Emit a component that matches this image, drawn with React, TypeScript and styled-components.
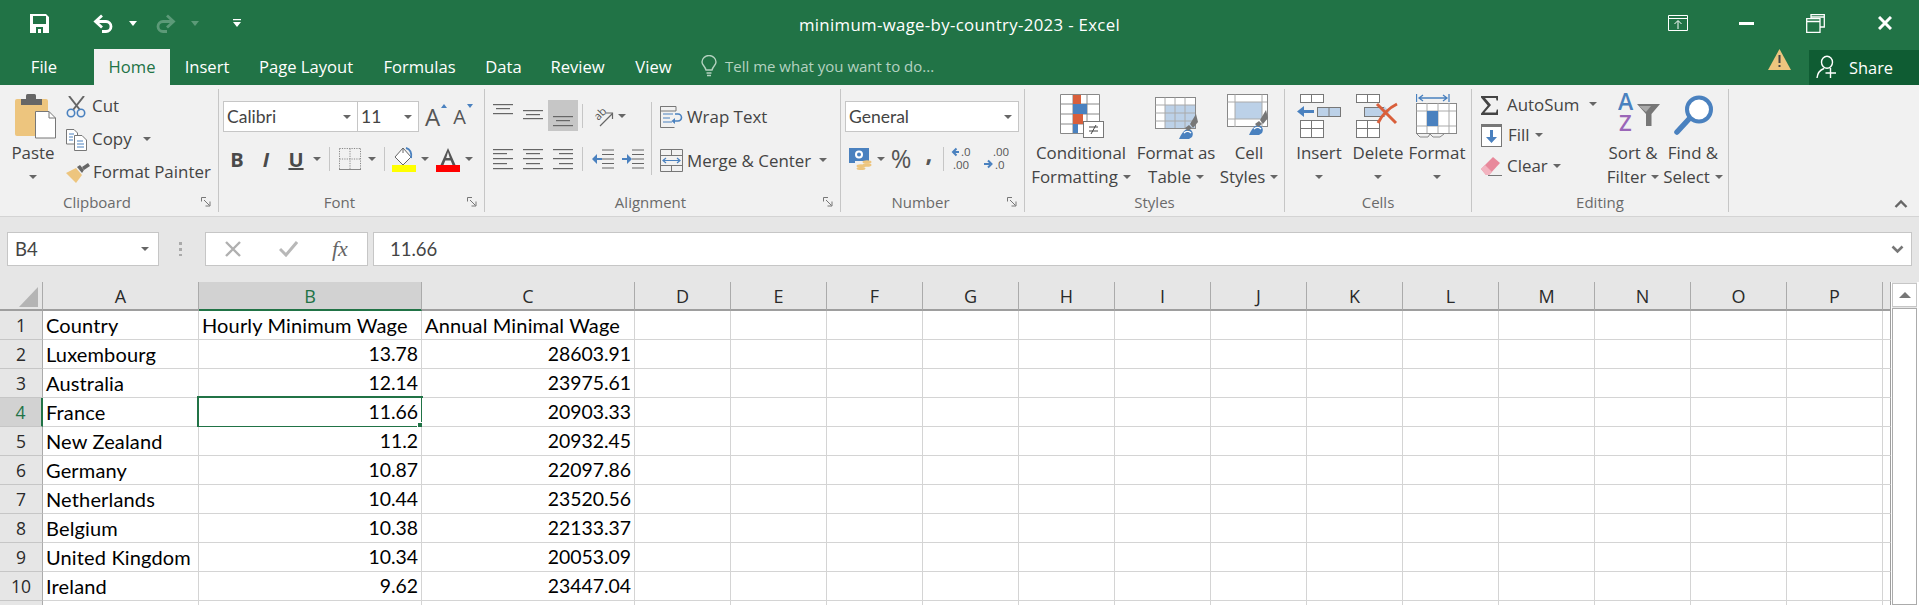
import React from 'react';
import styled, { createGlobalStyle } from 'styled-components';

const UI = `"Open Sans", "Noto Sans", sans-serif`;
const SHEET = `Lato, "Noto Sans", sans-serif`;
const BLUE = '#4a81bf';
const GREY = '#666';

const Global = createGlobalStyle`
  html, body { margin: 0; padding: 0; background: #e6e6e6; overflow: hidden; }
  * { box-sizing: border-box; }
`;

const Page = styled.div`
  width: 1919px; height: 605px; overflow: hidden; background: #e6e6e6;
  font-family: ${UI}; color: #444; display: flex; flex-direction: column;
`;

/* ---- title bar ---- */
const TitleBar = styled.div`
  height: 49px; background: #217346; display: grid; grid-template-columns: 1fr auto 1fr; color: #fff; flex: none;
`;
const QuickAccess = styled.div`display: flex; align-items: center; padding-left: 30px; height: 46px;`;
const TitleText = styled.div`font-size: 16.8px; line-height: 50px; letter-spacing: 0.02em;`;
const WindowButtons = styled.div`display: flex; align-items: center; justify-content: flex-end; height: 46px; padding-right: 27px;`;
const Slot = styled.span<{ $ml?: number }>`display: inline-flex; flex: none; align-items: center; margin-left: ${p => p.$ml ?? 0}px;`;

/* ---- tabs ---- */
const TabRow = styled.div`height: 36px; background: #217346; display: flex; align-items: stretch; flex: none;`;
const Tab = styled.div<{ $w: number; $active?: boolean; $ml?: number }>`
  width: ${p => p.$w}px; margin-left: ${p => p.$ml ?? 0}px; text-align: center; font-size: 16.6px; line-height: 35px; white-space: nowrap;
  color: ${p => (p.$active ? '#217346' : '#fff')}; background: ${p => (p.$active ? '#f1f1f1' : 'transparent')};
`;
const TellMe = styled.div`display: flex; align-items: center; margin-left: 13px; color: #b4d2c0; font-size: 15px; gap: 8px; flex: 1; height: 34px;`;
const Share = styled.div`
  width: 110px; height: 35px; background: #0f5c33; color: #fff; font-size: 16.4px; line-height: 33px; display: flex; align-items: center; padding-left: 7px; gap: 10px;
`;

/* ---- ribbon ---- */
const Ribbon = styled.div`height: 132px; background: #f1f1f1; border-bottom: 1px solid #d4d4d4; display: flex; align-items: flex-start; padding-top: 4px; flex: none;`;
const Group = styled.div<{ $w: number }>`
  width: ${p => p.$w}px; height: 123px; border-right: 1px solid #c6c6c6; display: flex; flex-direction: column; flex: none;
`;
const Body = styled.div<{ $pl?: number }>`height: 105px; display: flex; padding-left: ${p => p.$pl ?? 0}px;`;
const Footer = styled.div`height: 20px; display: flex; align-items: center;`;
const GroupLabel = styled.div`flex: 1; text-align: center; font-size: 15px; color: #6a6a6a; line-height: 20px;`;
const Launcher = styled.svg`width: 10px; height: 10px; margin: 0 7px; flex: none;`;
const Rest = styled.div`flex: 1; height: 123px; display: flex; align-items: flex-end; justify-content: flex-end; padding: 0 11px 4px 0;`;

const Col = styled.div<{ $w?: number; $pt?: number; $ml?: number }>`
  display: flex; flex-direction: column; flex: none; width: ${p => (p.$w ? `${p.$w}px` : 'auto')};
  padding-top: ${p => p.$pt ?? 0}px; margin-left: ${p => p.$ml ?? 0}px;
`;
const Big = styled.div<{ $w: number; $ml?: number }>`
  width: ${p => p.$w}px; margin-left: ${p => p.$ml ?? 0}px; display: flex; flex-direction: column; align-items: center; flex: none;
`;
const BigIcon = styled.div<{ $pt: number; $px?: number }>`
  height: 52px; padding-top: ${p => p.$pt}px; margin-left: ${p => p.$px ?? 0}px; display: flex; align-items: flex-start;
`;
const BigLine = styled.div`height: 24px; font-size: 16.9px; line-height: 24px; display: flex; align-items: center; white-space: nowrap; gap: 5px;`;
const SmallRow = styled.div<{ $h: number; $mt?: number }>`
  height: ${p => p.$h}px; margin-top: ${p => p.$mt ?? 0}px; display: flex; align-items: center; font-size: 16.9px; white-space: nowrap;
`;
const IconSlot = styled.span<{ $w: number; $mt?: number }>`width: ${p => p.$w}px; flex: none; display: inline-flex; align-items: center; margin-top: ${p => p.$mt ?? 0}px;`;
const Caret = styled.span<{ $ml?: number }>`
  display: inline-block; flex: none; width: 0; height: 0; margin-left: ${p => p.$ml ?? 0}px;
  border-left: 4px solid transparent; border-right: 4px solid transparent; border-top: 4px solid ${GREY};
`;
const ComboBox = styled.div<{ $w: number; $ml?: number }>`
  width: ${p => p.$w}px; margin-left: ${p => p.$ml ?? 0}px; height: 31px; background: #fff; border: 1px solid #c6c6c6; font-family: ${SHEET};
  display: flex; align-items: center; justify-content: space-between; padding: 0 6px 0 3px; font-size: 17.5px; color: #444; flex: none;
`;
const Letter = styled.span<{ $size: number; $ml?: number }>`
  position: relative; display: inline-block; flex: none; font-size: ${p => p.$size}px; margin-left: ${p => p.$ml ?? 0}px; line-height: 31px; color: #555;
`;
const SizeMark = styled.span<{ $down?: boolean }>`
  position: absolute; right: -7px; top: 3px; width: 0; height: 0;
  border-left: 3.5px solid transparent; border-right: 3.5px solid transparent;
  ${p => (p.$down ? `border-top: 4px solid ${BLUE};` : `border-bottom: 4px solid ${BLUE};`)}
`;
const StyleLetter = styled.span<{ $ml: number; $w: number; $italic?: boolean; $under?: boolean }>`
  display: inline-block; width: ${p => p.$w}px; margin-left: ${p => p.$ml}px; flex: none; text-align: center; font-size: 20px; font-weight: 700; color: #4a4a4a;
  font-style: ${p => (p.$italic ? 'italic' : 'normal')}; text-decoration: ${p => (p.$under ? 'underline' : 'none')};
`;
const Divider = styled.span<{ $ml: number; $h?: number }>`
  display: inline-block; width: 1px; height: ${p => p.$h ?? 24}px; background: #c6c6c6; margin-left: ${p => p.$ml}px; flex: none;
`;
const TallDivider = styled(Divider)`margin-top: 13px;`;
const Selected = styled.span<{ $ml: number }>`
  width: 30px; height: 31px; margin-left: ${p => p.$ml}px; background: #c6c6c6; display: inline-flex; justify-content: center; flex: none;
`;
const NumSign = styled.span<{ $ml: number; $w: number; $size: number }>`
  display: inline-block; width: ${p => p.$w}px; margin-left: ${p => p.$ml}px; text-align: center; font-size: ${p => p.$size}px; color: #555; flex: none;
  line-height: 30px; margin-top: -3px;
`;
const CommaSign = styled(NumSign)`font-weight: 700; margin-top: -12px;`;
const Collapse = styled.svg`width: 14px; height: 9px;`;

/* ---- formula bar ---- */
const FormulaRow = styled.div`height: 65px; padding-top: 15px; display: flex; align-items: flex-start; flex: none;`;
const InputBox = styled.div<{ $w: number; $ml: number }>`
  width: ${p => p.$w}px; margin-left: ${p => p.$ml}px; height: 34px; background: #fff; border: 1px solid #c6c6c6; flex: none;
  display: flex; align-items: center; font-family: ${SHEET}; font-size: 18.5px; color: #444;
`;
const NameText = styled.span`padding-left: 7px; flex: 1;`;
const NameCaret = styled(Caret)`margin-right: 9px;`;
const FormulaText = styled.span`padding-left: 16px; flex: 1;`;
const ChevronSlot = styled(Slot)`margin-right: 7px;`;
const Grip = styled.div`width: 3px; height: 14px; margin: 10px 0 0 20px; flex: none; background: repeating-linear-gradient(#aaa 0 3px, transparent 3px 6px);`;
const FxText = styled.span`font-family: "Liberation Serif", serif; font-style: italic; font-size: 22px; color: #666; margin-left: 34px; flex: none;`;

/* ---- sheet ---- */
const SheetRow = styled.div`flex: 1; display: flex; align-items: flex-start; background: #fff; position: relative;`;
const SheetGrid = styled.div`
  width: 1890px; display: grid; flex: none; font-family: ${SHEET};
  grid-template-columns: 43px 156px 223px 213px repeat(13, 96px) 8px;
  grid-auto-rows: 29px;
`;
const Corner = styled.div`background: #e6e6e6; border-right: 1px solid #ababab; border-bottom: 2px solid #9e9e9e; display: flex; align-items: flex-end; justify-content: flex-end; padding: 0 4px 2px 0;`;
const ColHead = styled.div<{ $on?: boolean }>`
  background: ${p => (p.$on ? '#d2d2d2' : '#e6e6e6')}; color: ${p => (p.$on ? '#217346' : '#2a2a2a')};
  border-right: 1px solid #ababab; border-bottom: 2px solid ${p => (p.$on ? '#217346' : '#9e9e9e')};
  text-align: center; font-size: 18px; line-height: 28px; font-family: ${UI};
`;
const ColEnd = styled.div`background: #e6e6e6; border-right: 1px solid #9e9e9e; border-bottom: 2px solid #9e9e9e;`;
const RowHead = styled.div<{ $on?: boolean }>`
  background: ${p => (p.$on ? '#d2d2d2' : '#e6e6e6')}; color: ${p => (p.$on ? '#217346' : '#2a2a2a')};
  border-right: ${p => (p.$on ? '2px solid #217346' : '1px solid #ababab')}; border-bottom: 1px solid #c6c6c6;
  text-align: center; line-height: 28px; font-family: ${UI}; font-size: 17.5px;
`;
const Cell = styled.div<{ $right?: boolean; $num?: boolean }>`
  position: relative; background: #fff; border-right: 1px solid #d4d4d4; border-bottom: 1px solid #d4d4d4; color: #000;
  font-size: ${p => (p.$num ? 19.4 : 20)}px; letter-spacing: ${p => (p.$num ? 0 : 0.15)}px; line-height: 28px; white-space: nowrap; padding: 0 3px; text-align: ${p => (p.$right ? 'right' : 'left')};
`;
const CellEnd = styled.div`background: #fff; border-right: 1px solid #9e9e9e; border-bottom: 1px solid #d4d4d4;`;
const Selection = styled.div`position: absolute; left: -2px; top: -2px; right: -2px; bottom: -2px; border: 2px solid #217346;`;
const Handle = styled.div`position: absolute; right: -4px; bottom: -4px; width: 8px; height: 8px; background: #217346; border: 1px solid #fff;`;
const ScrollBar = styled.div`width: 25px; margin-left: 2px; display: flex; flex-direction: column; flex: none; gap: 1px; padding-top: 1px; background: #e6e6e6; height: 323px;`;
const ScrollBtn = styled.div`height: 24px; background: #fff; border: 1px solid #c6c6c6; display: flex; align-items: center; justify-content: center;`;
const ScrollUp = styled.span`width: 0; height: 0; border-left: 6px solid transparent; border-right: 6px solid transparent; border-bottom: 6px solid #777;`;
const ScrollTrack = styled.div`flex: 1; background: #fff; border: 1px solid #ababab;`;

/* ---- icons ---- */
const Save = () => (
  <svg width="19" height="19" viewBox="0 0 19 19"><path fillRule="evenodd" fill="#fff" d="M0 0H16L19 3V19H0ZM3 2V10H16V2ZM6 13V19H13V13ZM8 15H11V19H8Z" /></svg>
);
const Undo = ({ c = '#fff', flip = false }: { c?: string; flip?: boolean }) => (
  <svg width="21" height="19" viewBox="0 0 21 19" style={flip ? { transform: 'scaleX(-1)' } : undefined}>
    <path d="M9 1.5 L2.5 7.5 L9 13.5 M3 7.5 H13 A5 5 0 0 1 13 17.5 H9" fill="none" stroke={c} strokeWidth="2.8" />
  </svg>
);
const SmallDown = ({ c = '#fff' }: { c?: string }) => (
  <svg width="8" height="5" viewBox="0 0 8 5"><path d="M0 0H8L4 5Z" fill={c} /></svg>
);
const Customize = () => (
  <svg width="8" height="8" viewBox="0 0 8 8"><path d="M0 0H8V1.2H0ZM0 3H8L4 8Z" fill="#fff" /></svg>
);
const RibbonOpts = () => (
  <svg width="20" height="16" viewBox="0 0 20 16"><path d="M.5.5H19.5V15.5H.5ZM.5 3.5H19.5M10 14V6M6.5 9L10 5.5 13.5 9" fill="none" stroke="#fff" /></svg>
);
const Minimize = () => <svg width="15" height="3" viewBox="0 0 15 3"><rect width="15" height="3" fill="#fff" /></svg>;
const Restore = () => (
  <svg width="19" height="19" viewBox="0 0 19 19"><path d="M5 4V.7H18.3V13H14M.7 4.7H14V18.3H.7ZM.7 7.5H14M5 3H18" fill="none" stroke="#fff" strokeWidth="1.3" /></svg>
);
const Close = () => (
  <svg width="14" height="14" viewBox="0 0 14 14"><path d="M1 1L13 13M13 1L1 13" stroke="#fff" strokeWidth="3" /></svg>
);
const Bulb = () => (
  <svg width="16" height="22" viewBox="0 0 16 22"><path d="M5 15C4 11 1 10 1 7A7 6.5 0 0 1 15 7C15 10 12 11 11 15ZM5.5 18H10.5M6 20.5H10" fill="none" stroke="#b4d2c0" strokeWidth="1.4" /></svg>
);
const Warn = () => (
  <svg width="23" height="21" viewBox="0 0 23 21"><path d="M11.5 0L23 21H0Z" fill="#edc57e" /><path d="M10.5 6H12.5V14H10.5ZM10.5 16H12.5V18H10.5Z" fill="#444" /></svg>
);
const Person = () => (
  <svg width="23" height="24" viewBox="0 0 23 24"><path d="M11 1.2A5.5 6 0 0 1 11 13.2A5.5 6 0 0 1 11 1.2ZM1 23C1.5 18 4 15 8 13.5M14.5 23V13M9.5 18H20" fill="none" stroke="#fff" strokeWidth="1.4" /></svg>
);
const LauncherIcon = () => (
  <Launcher viewBox="0 0 10 10"><path d="M.5 4.5V.5H5M3 3L8.5 8.5M9 4.5V9H4.5" fill="none" stroke="#777" /></Launcher>
);
const Paste = () => (
  <svg width="42" height="46" viewBox="0 0 42 46">
    <rect x="1" y="6" width="33" height="37" rx="2" fill="#edc57e" />
    <path d="M7 12V6H28V12Z" fill="#666" />
    <rect x="12" y="1" width="10" height="6" rx="1.5" fill="#666" />
    <path d="M21.5 18.5H35L41.5 25V45H21.5Z" fill="#fff" stroke="#777" />
    <path d="M35 18.5V25H41.5" fill="none" stroke="#777" />
  </svg>
);
const Scissors = () => (
  <svg width="21" height="22" viewBox="0 0 21 22">
    <path d="M3 0L14 14M18 0L7 14" stroke="#666" strokeWidth="2" fill="none" />
    <circle cx="5" cy="17" r="3.7" fill="none" stroke={BLUE} strokeWidth="1.6" />
    <circle cx="15" cy="17" r="3.7" fill="none" stroke={BLUE} strokeWidth="1.6" />
  </svg>
);
const CopyIcon = () => (
  <svg width="21" height="22" viewBox="0 0 21 22">
    <path d="M.5.5H8L11.5 4V15H.5Z" fill="#fff" stroke="#777" />
    <path d="M8.5 6.5H16L20.5 11V21.5H8.5Z" fill="#fff" stroke="#777" />
    <path d="M3 5H8M3 8H7M3 11H7M11 12H17M11 15H18M11 18H18" stroke={BLUE} />
  </svg>
);
const Brush = () => (
  <svg width="24" height="20" viewBox="0 0 24 20">
    <path d="M0 10L10 5L16 12L10 20Z" fill="#edc57e" />
    <path d="M11 4L14 2L18 7L16 10Z" fill="#666" />
    <path d="M16 4L22 0L24 3L18 7Z" fill="#666" />
  </svg>
);
const Lines = ({ ys, l, w = 20, h = 31, c = GREY }: { ys: number[]; l?: [number, number][]; w?: number; h?: number; c?: string }) => (
  <svg width={w} height={h} viewBox={`0 0 ${w} ${h}`} style={{ flex: 'none' }}>
    {ys.map((y, i) => (
      <rect key={y} x={l ? l[i][0] : 0} y={y} width={l ? l[i][1] : w} height="1.2" fill={c} />
    ))}
  </svg>
);
const Borders = () => (
  <svg width="22" height="22" viewBox="0 0 22 22">
    <path d="M.5.5H21.5M.5.5V21.5M21.5.5V21.5M11 .5V21.5M.5 11H21.5" fill="none" stroke="#888" strokeDasharray="1.2 1.2" />
    <path d="M0 21.5H22" stroke="#888" />
  </svg>
);
const FillColor = () => (
  <svg width="24" height="25" viewBox="0 0 24 25">
    <path d="M11 1L19 10L11 18L3 10Z" fill="#fff" stroke="#666" />
    <path d="M11 1V6" stroke="#666" />
    <path d="M14 1C18 2 20 6 19 11" fill="none" stroke={BLUE} strokeWidth="2" />
    <rect y="18" width="24" height="7" fill="#ffff00" />
  </svg>
);
const FontColor = () => (
  <svg width="24" height="25" viewBox="0 0 24 25">
    <path d="M12 1L19.5 18H16.5L14.7 13.5H9.3L7.5 18H4.5ZM12 5L10.2 11H13.8Z" fill="#555" fillRule="evenodd" />
    <rect y="18" width="24" height="7" fill="#ff0000" />
  </svg>
);
const Orient = () => (
  <svg width="21" height="23" viewBox="0 0 21 23">
    <text x="1" y="13" fontSize="11" fontFamily="Open Sans" fill="#555" transform="rotate(-45 8 10)">ab</text>
    <path d="M7 22L19 10M13 9H19.5V15" fill="none" stroke="#666" strokeWidth="1.2" />
  </svg>
);
const Indent = ({ rev = false }: { rev?: boolean }) => (
  <svg width="22" height="21" viewBox="0 0 22 21" style={{ flex: 'none' }}>
    <path d="M10 1H22M10 5.5H22M10 10H22M10 14.5H22M10 19H22" stroke={GREY} strokeWidth="1.2" />
    <path d={rev ? 'M0 9H5V5L10 10L5 15V11H0Z' : 'M10 9H5V5L0 10L5 15V11H10Z'} fill={BLUE} />
  </svg>
);
const WrapIcon = () => (
  <svg width="23" height="22" viewBox="0 0 23 22">
    <path d="M.5.5H14.5M.5.5V21.5H14.5M.5.5H16V5H.5" fill="none" stroke="#777" />
    <path d="M3 8H13M3 12H10M3 16H12" stroke={BLUE} />
    <path d="M13 15H18A3.5 3.5 0 0 0 18 8H15" fill="none" stroke={BLUE} strokeWidth="1.6" />
    <path d="M15 12L11.5 15L15 18Z" fill={BLUE} />
  </svg>
);
const MergeIcon = () => (
  <svg width="23" height="23" viewBox="0 0 23 23">
    <path d="M.5.5H22.5V22.5H.5ZM.5 6.5H22.5M.5 16.5H22.5M11.5.5V6.5M11.5 16.5V22.5" fill="none" stroke="#777" />
    <path d="M3 11.5H20M6 9L3 11.5L6 14M17 9L20 11.5L17 14" fill="none" stroke={BLUE} strokeWidth="1.2" />
  </svg>
);
const Currency = () => (
  <svg width="23" height="22" viewBox="0 0 23 22">
    <rect x="0" y="0" width="20" height="13" fill={BLUE} />
    <circle cx="10" cy="6.5" r="4" fill="#fff" /><circle cx="10" cy="6.5" r="2" fill={BLUE} />
    <path d="M0 13H6V15H0Z" fill={BLUE} />
    <ellipse cx="18" cy="14" rx="4.5" ry="1.8" fill="#edc57e" /><ellipse cx="18" cy="17" rx="4.5" ry="1.8" fill="#edc57e" />
    <ellipse cx="12" cy="18" rx="4.5" ry="1.8" fill="#edc57e" /><ellipse cx="12" cy="20.5" rx="4.5" ry="1.6" fill="#edc57e" />
  </svg>
);
const Decimals = ({ rev = false }: { rev?: boolean }) => (
  <svg width="26" height="26" viewBox="0 0 26 26" style={{ flex: 'none' }}>
    <path d={rev ? 'M1 18H7M5 14.5L8.5 18L5 21.5' : 'M2 6H8M5.5 2.5L2 6L5.5 9.5'} fill="none" stroke={BLUE} strokeWidth="2" />
    <text x="10" y="10" fontFamily="Open Sans" fontSize="11.5" fill="#555">{rev ? '.00' : '.0'}</text>
    <text x={rev ? 12 : 2} y="23" fontFamily="Open Sans" fontSize="11.5" fill="#555">{rev ? '.0' : '.00'}</text>
  </svg>
);
const CondFmt = () => (
  <svg width="45" height="44" viewBox="0 0 45 44">
    <path d="M.5.5H39.5V39.5H.5ZM.5 10H39.5M.5 20H39.5M.5 30H39.5M13 .5V39.5M27 .5V39.5" fill="#fff" stroke="#888" />
    <rect x="13" y="1" width="8" height="9" fill="#d95f3b" /><rect x="13" y="10" width="14" height="10" fill={BLUE} />
    <rect x="13" y="20" width="10" height="10" fill="#d95f3b" /><rect x="13" y="30" width="5" height="9" fill={BLUE} />
    <rect x="23.5" y="27.5" width="20" height="16" fill="#fff" stroke="#777" />
    <path d="M29 33H38M29 37H38M36 31L31 40" stroke="#444" fill="none" />
  </svg>
);
const Pen = () => (
  <g>
    <path d="M26 42C30 33 33 32 36 32C39 33 41 36 39 40L36 42Z" fill={BLUE} />
    <path d="M31 36C33 34 36 34 38 36" stroke="#fff" strokeWidth="1.5" fill="none" />
    <path d="M36 28L39 31L35 34L32 31Z" fill="#777" />
    <path d="M37 27L43 17L45 25L40 31Z" fill="#777" />
  </g>
);
const FmtTable = () => (
  <svg width="45" height="42" viewBox="0 0 45 42">
    <rect x=".5" y=".5" width="40" height="31" fill="#fff" stroke="#888" />
    <rect x="10" y="8" width="30" height="23" fill="#bcd1e8" />
    <path d="M.5 8H40M.5 16H40M.5 24H40M10 .5V31M20 .5V31M30 .5V31" stroke="#aaa" fill="none" />
    <g transform="translate(-2 0)"><Pen /></g>
  </svg>
);
const CellStyle = () => (
  <svg width="46" height="42" viewBox="0 0 46 42">
    <rect x=".5" y=".5" width="40" height="32" fill="#fff" stroke="#888" />
    <rect x="8" y="8" width="27" height="17" fill="#bcd1e8" />
    <path d="M.5 8H40M.5 25H40M8 .5V33M35 .5V33" stroke="#aaa" fill="none" />
    <g transform="translate(-4 -1)"><Pen /></g>
  </svg>
);
const CellGrid = ({ x, y, w, h, rows = 1, c = '#777' }: { x: number; y: number; w: number; h: number; rows?: number; c?: string }) => (
  <g fill="#fff" stroke={c}>
    <rect x={x + 0.5} y={y + 0.5} width={w} height={h} />
    <path d={`M${x + w / 2} ${y}V${y + h}`} />
    {rows > 1 && <path d={`M${x} ${y + h / 2}H${x + w}`} />}
  </g>
);
const InsertIcon = () => (
  <svg width="44" height="44" viewBox="0 0 44 44">
    <CellGrid x={3} y={0} w={23} h={8} />
    <rect x="20.5" y="13.5" width="23" height="9" fill="#bcd1e8" stroke="#777" /><path d="M32 13V22" stroke="#777" />
    <path d="M17 16V19H7V23L0 17.5L7 12V16Z" fill={BLUE} />
    <CellGrid x={3} y={26} w={23} h={17} rows={2} />
  </svg>
);
const DeleteIcon = () => (
  <svg width="44" height="44" viewBox="0 0 44 44">
    <CellGrid x={0} y={0} w={23} h={8} />
    <rect x="8.5" y="13.5" width="20" height="9" fill="#bcd1e8" stroke="#777" />
    <path d="M28 12L34 18L28 23Z" fill="#bcd1e8" />
    <CellGrid x={0} y={26} w={23} h={17} rows={2} />
    <path d="M21 10L40 29M41 10C33 14 26 21 22 29" fill="none" stroke="#d95f3b" strokeWidth="3" />
  </svg>
);
const FormatIcon = () => (
  <svg width="42" height="45" viewBox="0 0 42 45">
    <path d="M.5 1V9M33 1V9M3 5H31M7 2L3 5L7 8M27 2L31 5L27 8" fill="none" stroke={BLUE} strokeWidth="1.3" />
    <rect x=".5" y="10.5" width="40" height="30" fill="#fff" stroke="#888" />
    <path d="M.5 18H40M.5 33H40M11 10V40M22 10V40M33 10V40" stroke="#aaa" fill="none" />
    <rect x="11" y="18" width="11" height="15" fill={BLUE} />
    <path d="M1 41L4 44H12L14 41M14 41L17 44H24L28 41" fill="none" stroke="#888" />
  </svg>
);
const Sigma = () => (
  <svg width="17" height="19" viewBox="0 0 17 19"><path d="M0 0H17V4.5H15.5L15 2H4L10 9L3.5 16.5H15L15.8 13.5H17V19H0V17.5L6.7 9.5L0 1.5Z" fill="#444" /></svg>
);
const FillIcon = () => (
  <svg width="21" height="23" viewBox="0 0 21 23">
    <rect x=".5" y=".5" width="20" height="22" fill="#fff" stroke="#777" />
    <rect width="21" height="3" fill="#777" />
    <path d="M9 6H12V13H16L10.5 19L5 13H9Z" fill={BLUE} />
  </svg>
);
const Eraser = () => (
  <svg width="21" height="19" viewBox="0 0 21 19">
    <path d="M0 12L12 0L19 6L8 18H5Z" fill="#e8899b" />
    <path d="M0 12L4 8L11 15L8 18H5Z" fill="#f2b3bf" />
    <path d="M7 18.5H21" stroke="#777" />
  </svg>
);
const SortIcon = () => (
  <svg width="43" height="40" viewBox="0 0 43 40">
    <text x="0" y="17" fontFamily="Open Sans" fontWeight="600" fontSize="23" fill={BLUE}>A</text>
    <text x="1" y="38" fontFamily="Open Sans" fontWeight="600" fontSize="22" fill="#9a66b8">Z</text>
    <path d="M19 11H42L33.5 21V33H28V21Z" fill="#777" />
    <path d="M21 13H33L28 19Z" fill="#aaa" />
  </svg>
);
const Magnifier = () => (
  <svg width="41" height="41" viewBox="0 0 41 41">
    <circle cx="26" cy="14.5" r="12" fill="#fff" stroke={BLUE} strokeWidth="4" />
    <path d="M16 24L4 37" stroke={BLUE} strokeWidth="5.5" strokeLinecap="round" />
  </svg>
);

const COLS = 'ABCDEFGHIJKLMNOP'.split('');
const ROWS: [string, string, string][] = [
  ['Country', 'Hourly Minimum Wage', 'Annual Minimal Wage'],
  ['Luxembourg', '13.78', '28603.91'],
  ['Australia', '12.14', '23975.61'],
  ['France', '11.66', '20903.33'],
  ['New Zealand', '11.2', '20932.45'],
  ['Germany', '10.87', '22097.86'],
  ['Netherlands', '10.44', '23520.56'],
  ['Belgium', '10.38', '22133.37'],
  ['United Kingdom', '10.34', '20053.09'],
  ['Ireland', '9.62', '23447.04'],
  ['', '', ''],
];

export default function App() {
  return (
    <Page>
      <Global />
      <TitleBar>
        <QuickAccess>
          <Save />
          <Slot $ml={44}><Undo /></Slot>
          <Slot $ml={15}><SmallDown /></Slot>
          <Slot $ml={18}><Undo c="#5c9a78" flip /></Slot>
          <Slot $ml={15}><SmallDown c="#5c9a78" /></Slot>
          <Slot $ml={34}><Customize /></Slot>
        </QuickAccess>
        <TitleText>minimum-wage-by-country-2023 - Excel</TitleText>
        <WindowButtons>
          <RibbonOpts />
          <Slot $ml={51}><Minimize /></Slot>
          <Slot $ml={52}><Restore /></Slot>
          <Slot $ml={53}><Close /></Slot>
        </WindowButtons>
      </TitleBar>
      <TabRow>
        <Tab $w={88}>File</Tab>
        <Tab $w={76} $ml={6} $active>Home</Tab>
        <Tab $w={74}>Insert</Tab>
        <Tab $w={124}>Page Layout</Tab>
        <Tab $w={103}>Formulas</Tab>
        <Tab $w={65}>Data</Tab>
        <Tab $w={83}>Review</Tab>
        <Tab $w={69}>View</Tab>
        <TellMe><Bulb />Tell me what you want to do...</TellMe>
        <Warn />
        <Slot $ml={18}><Share><Person />Share</Share></Slot>
      </TabRow>
      <Ribbon>
        <Group $w={219}>
          <Body>
            <Big $w={66}>
              <BigIcon $pt={4} $px={3}><Paste /></BigIcon>
              <BigLine>Paste</BigLine>
              <BigLine><Caret /></BigLine>
            </Big>
            <Col>
              <SmallRow $h={33}><IconSlot $w={26} $mt={2}><Scissors /></IconSlot>Cut</SmallRow>
              <SmallRow $h={33}><IconSlot $w={26} $mt={2}><CopyIcon /></IconSlot>Copy<Caret $ml={11} /></SmallRow>
              <SmallRow $h={33}><IconSlot $w={27} $mt={2}><Brush /></IconSlot>Format Painter</SmallRow>
            </Col>
          </Body>
          <Footer><GroupLabel>Clipboard</GroupLabel><LauncherIcon /></Footer>
        </Group>
        <Group $w={266}>
          <Body $pl={4}>
            <Col $pt={12}>
              <SmallRow $h={31}>
                <ComboBox $w={135}>Calibri<Caret /></ComboBox>
                <ComboBox $w={62} $ml={-1}>11<Caret /></ComboBox>
                <Letter $size={24} $ml={6}>A<SizeMark /></Letter>
                <Letter $size={20} $ml={13}>A<SizeMark $down /></Letter>
              </SmallRow>
              <SmallRow $h={32} $mt={11}>
                <StyleLetter $ml={6} $w={16}>B</StyleLetter>
                <StyleLetter $ml={14} $w={14} $italic>I</StyleLetter>
                <StyleLetter $ml={15} $w={16} $under>U</StyleLetter>
                <Caret $ml={9} />
                <Divider $ml={8} />
                <Slot $ml={9}><Borders /></Slot>
                <Caret $ml={7} />
                <Divider $ml={8} />
                <Slot $ml={7}><FillColor /></Slot>
                <Caret $ml={5} />
                <Slot $ml={7}><FontColor /></Slot>
                <Caret $ml={5} />
              </SmallRow>
            </Col>
          </Body>
          <Footer><GroupLabel>Font</GroupLabel><LauncherIcon /></Footer>
        </Group>
        <Group $w={356}>
          <Body $pl={8}>
            <Col $pt={11}>
              <SmallRow $h={31}>
                <Lines ys={[4, 8, 13]} l={[[0, 20], [3, 14], [0, 20]]} />
                <Slot $ml={10}><Lines ys={[10, 14, 18]} l={[[0, 20], [3, 14], [0, 20]]} /></Slot>
                <Selected $ml={5}><Lines ys={[16, 20, 25]} l={[[0, 20], [3, 14], [0, 20]]} /></Selected>
                <Divider $ml={4} />
                <Slot $ml={10}><Orient /></Slot>
                <Caret $ml={4} />
              </SmallRow>
              <SmallRow $h={32} $mt={12}>
                <Lines h={22} ys={[1, 5, 10, 15, 20]} l={[[0, 20], [0, 14], [0, 20], [0, 14], [0, 20]]} />
                <Slot $ml={10}><Lines h={22} ys={[1, 5, 10, 15, 20]} l={[[0, 20], [3, 14], [0, 20], [3, 14], [0, 20]]} /></Slot>
                <Slot $ml={10}><Lines h={22} ys={[1, 5, 10, 15, 20]} l={[[0, 20], [6, 14], [0, 20], [6, 14], [0, 20]]} /></Slot>
                <Divider $ml={9} />
                <Slot $ml={9}><Indent /></Slot>
                <Slot $ml={8}><Indent rev /></Slot>
              </SmallRow>
            </Col>
            <TallDivider $ml={7} $h={73} />
            <Col $pt={12} $ml={8}>
              <SmallRow $h={31}><IconSlot $w={27}><WrapIcon /></IconSlot>Wrap Text</SmallRow>
              <SmallRow $h={32} $mt={12}><IconSlot $w={27}><MergeIcon /></IconSlot>Merge &amp; Center<Caret $ml={8} /></SmallRow>
            </Col>
          </Body>
          <Footer><GroupLabel>Alignment</GroupLabel><LauncherIcon /></Footer>
        </Group>
        <Group $w={184}>
          <Body $pl={4}>
            <Col $pt={12}>
              <SmallRow $h={31}><ComboBox $w={174}>General<Caret /></ComboBox></SmallRow>
              <SmallRow $h={32} $mt={11}>
                <Slot $ml={4}><Currency /></Slot>
                <Caret $ml={5} />
                <NumSign $ml={3} $w={26} $size={25}>%</NumSign>
                <CommaSign $ml={9} $w={12} $size={24}>,</CommaSign>
                <Divider $ml={8} />
                <Slot $ml={7}><Decimals /></Slot>
                <Slot $ml={6}><Decimals rev /></Slot>
              </SmallRow>
            </Col>
          </Body>
          <Footer><GroupLabel>Number</GroupLabel><LauncherIcon /></Footer>
        </Group>
        <Group $w={260}>
          <Body $pl={6}>
            <Big $w={100}>
              <BigIcon $pt={5} $px={2}><CondFmt /></BigIcon>
              <BigLine>Conditional</BigLine>
              <BigLine>Formatting<Caret /></BigLine>
            </Big>
            <Big $w={78} $ml={6}>
              <BigIcon $pt={8} $px={3}><FmtTable /></BigIcon>
              <BigLine>Format as</BigLine>
              <BigLine>Table<Caret /></BigLine>
            </Big>
            <Big $w={60} $ml={4}>
              <BigIcon $pt={5} $px={2}><CellStyle /></BigIcon>
              <BigLine>Cell</BigLine>
              <BigLine>Styles<Caret /></BigLine>
            </Big>
          </Body>
          <Footer><GroupLabel>Styles</GroupLabel></Footer>
        </Group>
        <Group $w={187}>
          <Body $pl={8}>
            <Big $w={52}>
              <BigIcon $pt={5}><InsertIcon /></BigIcon>
              <BigLine>Insert</BigLine>
              <BigLine><Caret /></BigLine>
            </Big>
            <Big $w={58} $ml={4}>
              <BigIcon $pt={5}><DeleteIcon /></BigIcon>
              <BigLine>Delete</BigLine>
              <BigLine><Caret /></BigLine>
            </Big>
            <Big $w={60}>
              <BigIcon $pt={4}><FormatIcon /></BigIcon>
              <BigLine>Format</BigLine>
              <BigLine><Caret /></BigLine>
            </Big>
          </Body>
          <Footer><GroupLabel>Cells</GroupLabel></Footer>
        </Group>
        <Group $w={257}>
          <Body $pl={9}>
            <Col $w={122}>
              <SmallRow $h={30}><IconSlot $w={26} $mt={2}><Sigma /></IconSlot>AutoSum<Caret $ml={10} /></SmallRow>
              <SmallRow $h={31}><IconSlot $w={27} $mt={2}><FillIcon /></IconSlot>Fill<Caret $ml={5} /></SmallRow>
              <SmallRow $h={31}><IconSlot $w={26} $mt={2}><Eraser /></IconSlot>Clear<Caret $ml={5} /></SmallRow>
            </Col>
            <Big $w={60}>
              <BigIcon $pt={4} $px={12}><SortIcon /></BigIcon>
              <BigLine>Sort &amp;</BigLine>
              <BigLine>Filter<Caret /></BigLine>
            </Big>
            <Big $w={60}>
              <BigIcon $pt={6}><Magnifier /></BigIcon>
              <BigLine>Find &amp;</BigLine>
              <BigLine>Select<Caret /></BigLine>
            </Big>
          </Body>
          <Footer><GroupLabel>Editing</GroupLabel></Footer>
        </Group>
        <Rest>
          <Collapse viewBox="0 0 14 9"><path d="M1.5 8L7 2.5L12.5 8" fill="none" stroke="#666" strokeWidth="2.4" /></Collapse>
        </Rest>
      </Ribbon>
      <FormulaRow>
        <InputBox $w={152} $ml={7}><NameText>B4</NameText><NameCaret /></InputBox>
        <Grip />
        <InputBox $w={163} $ml={23}>
          <Slot $ml={18}>
            <svg width="18" height="16" viewBox="0 0 18 16"><path d="M2 1L16 15M16 1L2 15" stroke="#b0b0b0" strokeWidth="2.4" /></svg>
          </Slot>
          <Slot $ml={37}>
            <svg width="19" height="16" viewBox="0 0 19 16"><path d="M1 8L7 14L18 1" fill="none" stroke="#b8b8b8" strokeWidth="3" /></svg>
          </Slot>
          <FxText>fx</FxText>
        </InputBox>
        <InputBox $w={1539} $ml={5}>
          <FormulaText>11.66</FormulaText>
          <ChevronSlot>
            <svg width="13" height="9" viewBox="0 0 13 9"><path d="M1.5 1.5L6.5 6.5L11.5 1.5" fill="none" stroke="#777" strokeWidth="2.6" /></svg>
          </ChevronSlot>
        </InputBox>
      </FormulaRow>
      <SheetRow>
        <SheetGrid>
          <Corner><svg width="19" height="20" viewBox="0 0 19 20"><path d="M19 0V20H0Z" fill="#b4b4b4" /></svg></Corner>
          {COLS.map(c => <ColHead key={c} $on={c === 'B'}>{c}</ColHead>)}
          <ColEnd />
          {ROWS.map((r, i) => (
            <React.Fragment key={i}>
              <RowHead $on={i === 3}>{i + 1}</RowHead>
              <Cell>{r[0]}</Cell>
              <Cell $right={i > 0} $num={i > 0}>
                {r[1]}
                {i === 3 && <Selection><Handle /></Selection>}
              </Cell>
              <Cell $right={i > 0} $num={i > 0}>{r[2]}</Cell>
              {COLS.slice(3).map(c => <Cell key={c} />)}
              <CellEnd />
            </React.Fragment>
          ))}
        </SheetGrid>
        <ScrollBar>
          <ScrollBtn><ScrollUp /></ScrollBtn>
          <ScrollTrack />
        </ScrollBar>
      </SheetRow>
    </Page>
  );
}
